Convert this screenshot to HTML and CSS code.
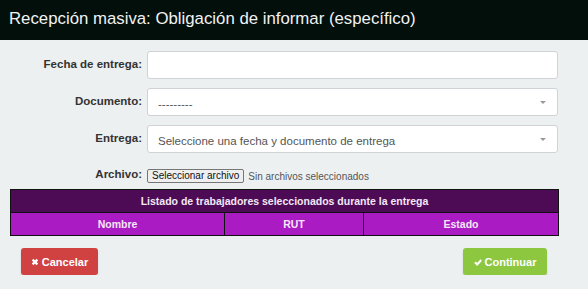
FILE: index.html
```html
<!DOCTYPE html>
<html lang="es">
<head>
    <meta charset="UTF-8">
    <title>Recepción masiva</title>
    <link rel="stylesheet" href="styles.css">
</head>
<body>
    <header class="title-bar">Recepción masiva: Obligación de informar (específico)</header>

    <form class="bulk-form">
        <div class="form-row">
            <label class="field-label">Fecha de entrega:</label>
            <div class="field-box"></div>
        </div>
        <div class="form-row">
            <label class="field-label">Documento:</label>
            <div class="field-box select-box">
                <span class="select-text">---------</span>
                <span class="caret"></span>
            </div>
        </div>
        <div class="form-row">
            <label class="field-label">Entrega:</label>
            <div class="field-box select-box">
                <span class="select-text">Seleccione una fecha y documento de entrega</span>
                <span class="caret"></span>
            </div>
        </div>
        <div class="form-row file-row">
            <label class="field-label">Archivo:</label>
            <div class="file-field">
                <span class="file-button">Seleccionar archivo</span>
                <span class="file-name">Sin archivos seleccionados</span>
            </div>
        </div>
    </form>

    <table class="workers">
        <tr class="caption-row">
            <th colspan="3">Listado de trabajadores seleccionados durante la entrega</th>
        </tr>
        <tr class="head-row">
            <th class="col-name">Nombre</th>
            <th class="col-rut">RUT</th>
            <th class="col-state">Estado</th>
        </tr>
    </table>

    <div class="actions">
        <button class="btn btn-cancel">
            <svg class="icon" viewBox="0 0 10 10"><path d="M2 2 L8 8 M8 2 L2 8" stroke="#fff" stroke-width="2.8"/></svg>
            Cancelar
        </button>
        <button class="btn btn-ok">
            <svg class="icon" viewBox="0 0 10 10"><path d="M1.2 5.2 L4 8 L9 2.6" fill="none" stroke="#fff" stroke-width="2.6"/></svg>
            Continuar
        </button>
    </div>
</body>
</html>
```

FILE: styles.css
```css
body {
    margin: 0;
    padding: 0;
    font-family: "Liberation Sans", Arial, sans-serif;
    background-color: #ecf0f1;
    color: #333;
}

.title-bar {
    height: 40px;
    line-height: 37px;
    padding-left: 9px;
    background-color: #020f0b;
    color: #f2f2f2;
    font-size: 16.8px;
}

.bulk-form {
    padding: 11px 30px 0 0;
}

.form-row {
    display: grid;
    grid-template-columns: 142px 1fr;
    column-gap: 5px;
    align-items: start;
    margin-bottom: 9px;
}

.field-label {
    text-align: right;
    font-size: 11.5px;
    font-weight: bold;
    padding-top: 7px;
}

.field-box {
    height: 26px;
    background-color: #fff;
    border: 1px solid #cfd3d5;
    border-radius: 3px;
}

.select-box {
    display: flex;
    align-items: center;
    justify-content: space-between;
    padding: 0 10px;
    color: #555;
    font-size: 11.5px;
}

.select-text {
    padding-top: 3px;
}

.caret {
    width: 0;
    height: 0;
    border-left: 3px solid transparent;
    border-right: 3px solid transparent;
    border-top: 3px solid #999;
    margin-right: 1px;
}

.file-row {
    margin-top: 15px;
    margin-bottom: 6px;
}

.file-row .field-label {
    padding-top: 0;
}

.file-field {
    display: flex;
    align-items: center;
    font-size: 10px;
    padding-top: 1px;
}

.file-button {
    border: 1px solid #767676;
    background-color: #efefef;
    color: #111;
    padding: 0 4px;
    line-height: 12px;
    border-radius: 2px;
}

.file-name {
    margin-left: 4px;
    color: #555;
}

.workers {
    margin: 0 29px 0 10px;
    width: 549px;
    border-collapse: collapse;
    font-size: 10.5px;
    color: #f3e8f5;
}

.workers th {
    border: 1px solid #111;
    height: 22px;
    padding: 0;
    font-weight: bold;
}

.caption-row th {
    background-color: #4d0b55;
}

.head-row th {
    background-color: #aa1bc4;
}

.col-name {
    width: 213px;
}

.col-rut {
    width: 138px;
}

.actions {
    display: flex;
    justify-content: space-between;
    padding: 12px 41px 0 21px;
}

.btn {
    display: flex;
    align-items: center;
    justify-content: center;
    gap: 3px;
    height: 27px;
    border: none;
    border-radius: 3px;
    color: #fff;
    font-family: "Liberation Sans", Arial, sans-serif;
    font-size: 11px;
    font-weight: bold;
    box-shadow: 0 2px 2px rgba(0, 0, 0, 0.15);
}

.btn .icon {
    width: 8px;
    height: 8px;
}

.btn-cancel {
    width: 77px;
    background-color: #d04242;
}

.btn-ok {
    width: 84px;
    background-color: #8dc63f;
}
```
